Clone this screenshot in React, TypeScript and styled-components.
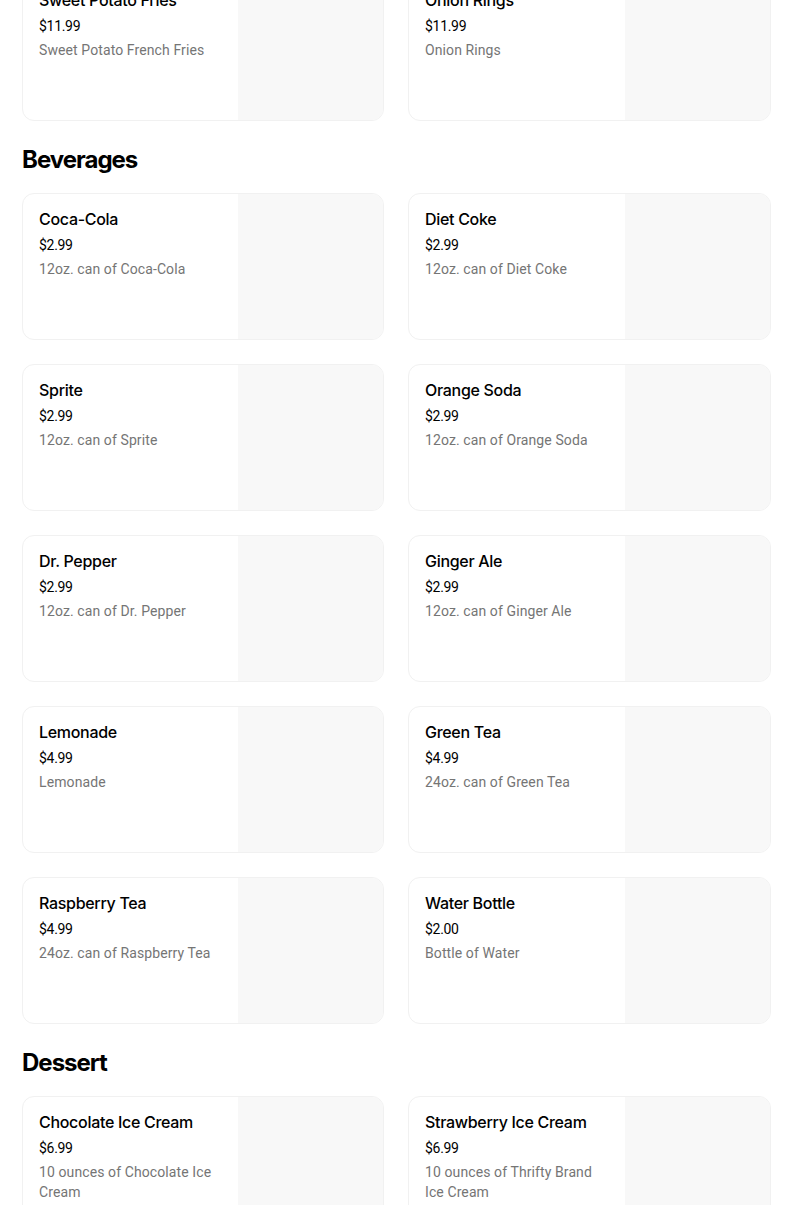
import styled, { createGlobalStyle } from "styled-components";

const GlobalStyle = createGlobalStyle`
    html, body {
        margin: 0;
        padding: 0;
        background: #ffffff;
        font-family: Inter, "Noto Sans", sans-serif;
        color: #000000;
    }
`;

type Item = { name: string; price: string; description: string };
type Section = { title?: string; items: Item[] };

const sections: Section[] = [
    {
        items: [
            { name: "Sweet Potato Fries", price: "$11.99", description: "Sweet Potato French Fries" },
            { name: "Onion Rings", price: "$11.99", description: "Onion Rings" },
        ],
    },
    {
        title: "Beverages",
        items: [
            { name: "Coca-Cola", price: "$2.99", description: "12oz. can of Coca-Cola" },
            { name: "Diet Coke", price: "$2.99", description: "12oz. can of Diet Coke" },
            { name: "Sprite", price: "$2.99", description: "12oz. can of Sprite" },
            { name: "Orange Soda", price: "$2.99", description: "12oz. can of Orange Soda" },
            { name: "Dr. Pepper", price: "$2.99", description: "12oz. can of Dr. Pepper" },
            { name: "Ginger Ale", price: "$2.99", description: "12oz. can of Ginger Ale" },
            { name: "Lemonade", price: "$4.99", description: "Lemonade" },
            { name: "Green Tea", price: "$4.99", description: "24oz. can of Green Tea" },
            { name: "Raspberry Tea", price: "$4.99", description: "24oz. can of Raspberry Tea" },
            { name: "Water Bottle", price: "$2.00", description: "Bottle of Water" },
        ],
    },
    {
        title: "Dessert",
        items: [
            { name: "Chocolate Ice Cream", price: "$6.99", description: "10 ounces of Chocolate Ice Cream" },
            { name: "Strawberry Ice Cream", price: "$6.99", description: "10 ounces of Thrifty Brand Ice Cream" },
        ],
    },
];

// the screenshot is taken part way down the menu, mid "Sides" row
const Page = styled.main`
    margin-top: -26px;
    padding: 0 33px 0 22px;
    height: 1231px;
    overflow: hidden;
`;

const SectionBlock = styled.section`
    display: flex;
    flex-direction: column;
`;

const SectionTitle = styled.h2`
    margin: 23px 0 17px;
    font-size: 24px;
    line-height: 32px;
    font-weight: 700;
    letter-spacing: -1px;
`;

const Grid = styled.div`
    display: grid;
    grid-template-columns: 362px 363px;
    gap: 24px;
`;

const Card = styled.div`
    display: flex;
    height: 147px;
    box-sizing: border-box;
    border: 1px solid #f1f1f1;
    border-radius: 12px;
    overflow: hidden;
    background: #ffffff;
`;

const Info = styled.div`
    flex: 1;
    padding: 15px 16px 16px 16px;
    display: flex;
    flex-direction: column;
`;

const Name = styled.div`
    font-size: 16px;
    line-height: 20px;
    font-weight: 500;
    letter-spacing: -0.3px;
    color: #000000;
`;

const Price = styled.div`
    margin-top: 6px;
    font-family: Roboto, "Liberation Sans", sans-serif;
    font-size: 14px;
    line-height: 20px;
    letter-spacing: -0.3px;
    color: #000000;
`;

const Description = styled.div`
    margin-top: 4px;
    font-family: Roboto, "Liberation Sans", sans-serif;
    font-size: 14px;
    line-height: 20px;
    font-weight: 400;
    letter-spacing: 0.1px;
    color: #757575;
`;

const Thumb = styled.div`
    width: 145px;
    flex-shrink: 0;
    background: #f8f8f8;
`;

const MenuCard = ({ item }: { item: Item }) => (
    <Card>
        <Info>
            <Name>{item.name}</Name>
            <Price>{item.price}</Price>
            <Description>{item.description}</Description>
        </Info>
        <Thumb />
    </Card>
);

const App = () => {
    return (
        <>
            <GlobalStyle />
            <Page>
                {sections.map((section, i) => (
                    <SectionBlock key={i}>
                        {section.title && <SectionTitle>{section.title}</SectionTitle>}
                        <Grid>
                            {section.items.map((item) => (
                                <MenuCard key={item.name} item={item} />
                            ))}
                        </Grid>
                    </SectionBlock>
                ))}
            </Page>
        </>
    );
};

export default App;
